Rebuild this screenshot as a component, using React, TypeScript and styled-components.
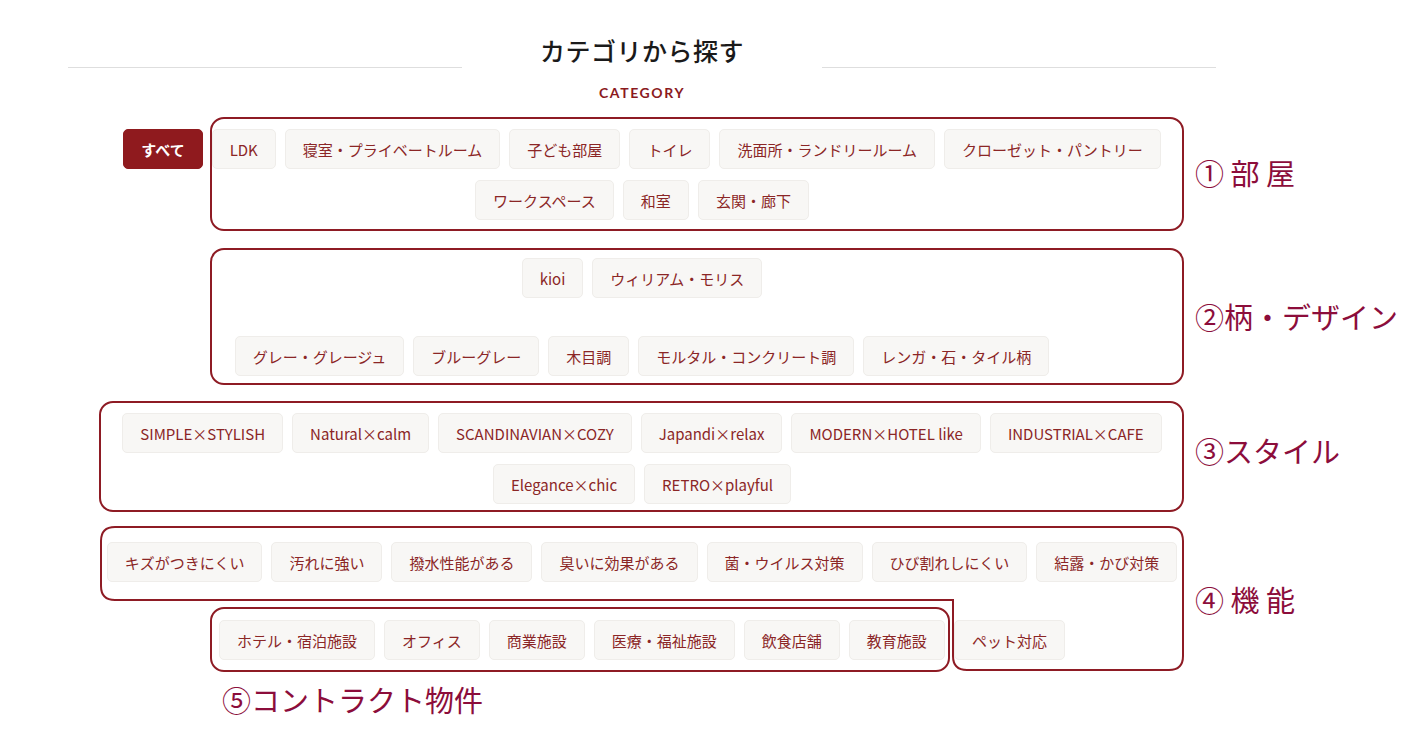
import React from 'react';
import styled, { createGlobalStyle } from 'styled-components';

const GlobalStyle = createGlobalStyle`
  html, body {
    margin: 0;
    padding: 0;
    background: #ffffff;
  }
  body {
    font-family: "Noto Sans CJK JP", "Noto Sans", sans-serif;
  }
`;

const Page = styled.div`
  position: relative;
  width: 1428px;
  height: 755px;
  overflow: hidden;
`;

const Section = styled.section`
  margin-left: 68px;
  width: 1148px;
  padding-top: 33px;
`;

const Header = styled.div`
  display: flex;
  align-items: flex-end;
`;

const Rule = styled.div`
  flex: 1;
  height: 1px;
  background: #dedede;
`;

const Title = styled.h2`
  width: 360px;
  margin: 0;
  text-align: center;
  font-size: 25px;
  line-height: 35px;
  font-weight: 500;
  color: #1a1a1a;
  letter-spacing: 0.5px;
`;

const Sub = styled.div`
  margin-top: 15px;
  text-align: center;
  font-family: Lato, "Noto Sans", sans-serif;
  font-weight: 700;
  font-size: 14px;
  line-height: 20px;
  letter-spacing: 1.6px;
  color: #8b1a1e;
`;

const List = styled.div`
  margin-top: 26px;
  display: flex;
  flex-direction: column;
`;

const Row = styled.div<{ $mt: number }>`
  display: flex;
  justify-content: center;
  gap: 9px;
  margin-top: ${p => p.$mt}px;
`;

const Chip = styled.button<{ $active?: boolean }>`
  height: 40px;
  padding: 0 17px;
  border-radius: 5px;
  border: 1px solid ${p => (p.$active ? '#8f1a1e' : '#efedea')};
  background: ${p => (p.$active ? '#8f1a1e' : '#f8f7f5')};
  color: ${p => (p.$active ? '#ffffff' : '#8b2626')};
  font-family: "Noto Sans CJK JP", "Noto Sans", sans-serif;
  font-size: 15px;
  font-weight: ${p => (p.$active ? 700 : 400)};
  white-space: nowrap;
  cursor: pointer;
`;

const Frame = styled.div<{ $x: number; $y: number; $w: number; $h: number }>`
  position: absolute;
  left: ${p => p.$x}px;
  top: ${p => p.$y}px;
  width: ${p => p.$w}px;
  height: ${p => p.$h}px;
  box-sizing: border-box;
  border: 2px solid #8e1b24;
  border-radius: 14px;
  pointer-events: none;
`;

const Shape = styled.svg`
  position: absolute;
  left: 0;
  top: 0;
  pointer-events: none;
`;

const Label = styled.div<{ $x: number; $y: number }>`
  position: absolute;
  left: ${p => p.$x}px;
  top: ${p => p.$y - 22}px;
  font-family: "Noto Sans CJK JP", sans-serif;
  font-size: 29px;
  line-height: 40px;
  color: #8c0d3b;
  white-space: nowrap;
`;

const rows: { mt: number; items: string[] }[] = [
  { mt: 0, items: ['すべて', 'LDK', '寝室・プライベートルーム', '子ども部屋', 'トイレ', '洗面所・ランドリールーム', 'クローゼット・パントリー'] },
  { mt: 11, items: ['ワークスペース', '和室', '玄関・廊下'] },
  { mt: 38, items: ['kioi', 'ウィリアム・モリス'] },
  { mt: 38, items: ['グレー・グレージュ', 'ブルーグレー', '木目調', 'モルタル・コンクリート調', 'レンガ・石・タイル柄'] },
  { mt: 37, items: ['SIMPLE×STYLISH', 'Natural×calm', 'SCANDINAVIAN×COZY', 'Japandi×relax', 'MODERN×HOTEL like', 'INDUSTRIAL×CAFE'] },
  { mt: 11, items: ['Elegance×chic', 'RETRO×playful'] },
  { mt: 38, items: ['キズがつきにくい', '汚れに強い', '撥水性能がある', '臭いに効果がある', '菌・ウイルス対策', 'ひび割れしにくい', '結露・かび対策'] },
  { mt: 38, items: ['ホテル・宿泊施設', 'オフィス', '商業施設', '医療・福祉施設', '飲食店舗', '教育施設', 'ペット対応'] },
];

const App = () => {
  return (
    <Page>
      <GlobalStyle />
      <Section>
        <Header>
          <Rule />
          <Title>カテゴリから探す</Title>
          <Rule />
        </Header>
        <Sub>CATEGORY</Sub>
        <List>
          {rows.map((row, i) => (
            <Row key={i} $mt={row.mt}>
              {row.items.map(item => (
                <Chip key={item} $active={item === 'すべて'}>{item}</Chip>
              ))}
            </Row>
          ))}
        </List>
      </Section>

      {/* annotation overlay drawn on top of the screenshot */}
      <Frame $x={210} $y={117} $w={974} $h={114} />
      <Frame $x={210} $y={248} $w={974} $h={137} />
      <Frame $x={99} $y={401} $w={1085} $h={111} />
      <Frame $x={210} $y={607} $w={740} $h={65} />
      <Shape width="1428" height="755">
        <path
          d="M115 527 H1169 Q1183 527 1183 541 V656 Q1183 670 1169 670 H967 Q953 670 953 656 V600 H115 Q101 600 101 586 V541 Q101 527 115 527 Z"
          fill="none"
          stroke="#8e1b24"
          strokeWidth="2"
        />
      </Shape>
      <Label $x={1195} $y={174}>① 部 屋</Label>
      <Label $x={1195} $y={318}>②柄・デザイン</Label>
      <Label $x={1195} $y={452}>③スタイル</Label>
      <Label $x={1195} $y={601}>④ 機 能</Label>
      <Label $x={222} $y={701}>⑤コントラクト物件</Label>
    </Page>
  );
};

export default App;
